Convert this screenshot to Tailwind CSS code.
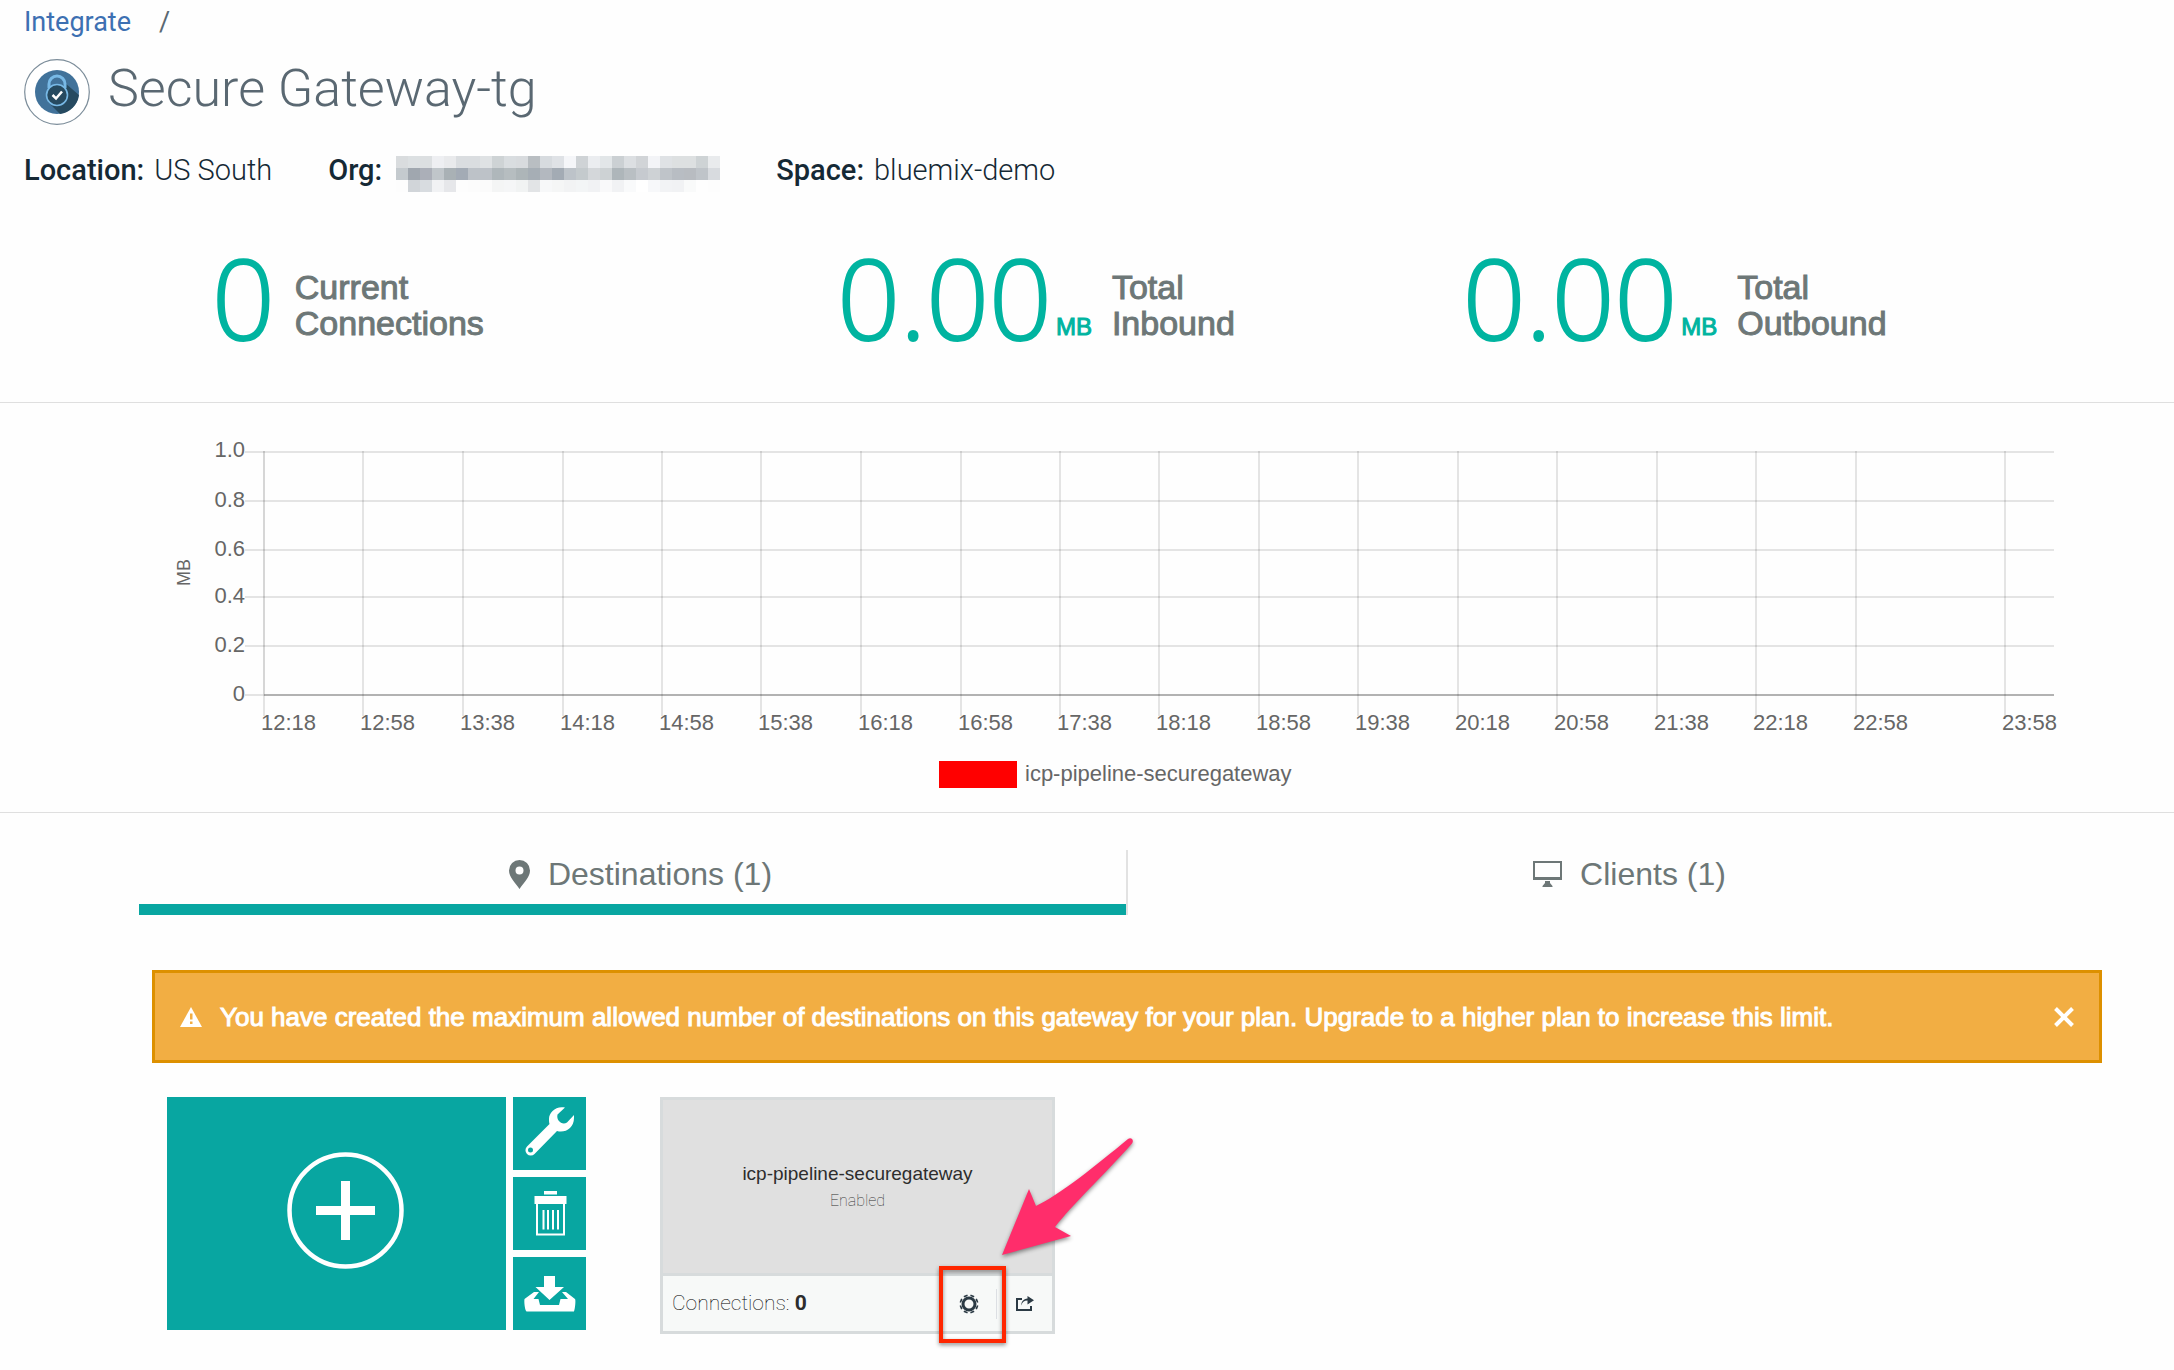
<!DOCTYPE html>
<html lang="en">
<head>
<meta charset="utf-8">
<meta name="viewport" content="width=device-width, initial-scale=1">
<title>Secure Gateway-tg</title>
<script src="https://cdn.jsdelivr.net/npm/@tailwindcss/browser@4"></script>
</head>
<body class="bg-[#fefefe] font-['Liberation_Sans',sans-serif] text-[#6d7777]">

<header class="px-6 pt-[6px] font-[Roboto,sans-serif]">
  <nav class="flex gap-7 text-[27px] leading-[32px]" aria-label="Breadcrumb">
    <a href="#" class="text-[#3d70b2]">Integrate</a>
    <span class="text-[#5a6872]">/</span>
  </nav>
  <div class="mt-[21px] flex items-start gap-[18px]">
    <svg class="size-[66px] shrink-0" viewBox="0 0 66 66" fill="none" aria-hidden="true">
      <circle cx="33" cy="33" r="32.3" fill="#fff" stroke="#7c8d9a" stroke-width="1.2"/>
      <circle cx="33" cy="33" r="22" fill="#41729a"/>
      <path d="M41 24 55 36A22 22 0 0 1 36 55L24 43Z" fill="#264a60"/>
      <path d="M25 29v-4a8 8 0 0 1 16 0v4" stroke="#78b9e6" stroke-width="3"/>
      <circle cx="33" cy="36" r="10.500" fill="#264a60" stroke="#78b9e6" stroke-width="1.600"/>
      <path d="m28.500 36 3.500 3.500 6-7" stroke="#fff" stroke-width="2.500"/>
    </svg>
    <h1 class="text-[52px] leading-[60px] font-light text-[#5a6872]">Secure Gateway-tg</h1>
  </div>
  <dl class="mt-[25px] flex gap-14 text-[29px] leading-[40px] text-[#152935]">
    <div class="flex gap-[10px]"><dt class="font-medium">Location:</dt><dd class="font-light">US South</dd></div>
    <div class="flex gap-[6px]"><dt class="font-medium">Org:</dt><dd class="pt-[6px]"><svg id="redacted" class="h-9 w-[332px]" viewBox="0 0 332 36" shape-rendering="crispEdges" role="img" aria-label="Hidden"></svg></dd></div>
    <div class="flex gap-[10px]"><dt class="font-medium">Space:</dt><dd class="font-light">bluemix-demo</dd></div>
  </dl>
</header>

<section class="grid grid-cols-3 border-b border-[#dfdfdf] pt-[54px] pr-[86px] pb-[53px] pl-[212px]">
  <div class="flex items-end">
    <span class="font-['Open_Sans',sans-serif] text-[110px] leading-[103px] font-light text-[#00b4a0] [-webkit-text-stroke:2px]">0</span>
    <span class="ml-5 pb-2 text-[34px] leading-[36px] [-webkit-text-stroke:1px]">Current<br>Connections</span>
  </div>
  <div class="flex items-end">
    <span class="font-['Open_Sans',sans-serif] text-[110px] leading-[103px] font-light text-[#00b4a0] [-webkit-text-stroke:2px]">0.00</span>
    <span class="ml-1 pb-2 text-[24px] leading-[28px] text-[#00b4a0] [-webkit-text-stroke:1px]">MB</span>
    <span class="ml-5 pb-2 text-[34px] leading-[36px] [-webkit-text-stroke:1px]">Total<br>Inbound</span>
  </div>
  <div class="flex items-end">
    <span class="font-['Open_Sans',sans-serif] text-[110px] leading-[103px] font-light text-[#00b4a0] [-webkit-text-stroke:2px]">0.00</span>
    <span class="ml-1 pb-2 text-[24px] leading-[28px] text-[#00b4a0] [-webkit-text-stroke:1px]">MB</span>
    <span class="ml-5 pb-2 text-[34px] leading-[36px] [-webkit-text-stroke:1px]">Total<br>Outbound</span>
  </div>
</section>

<section class="border-b border-[#dfdfdf]">
  <svg class="block w-full" viewBox="0 0 2174 409" fill="#666" stroke="none" font-size="22" role="img" aria-label="Gateway traffic in MB">
    <g fill="#000" fill-opacity=".1" shape-rendering="crispEdges">
      <path d="M245 48h1809v2H245zM245 97h1809v2H245zM245 146h1809v2H245zM245 193h1809v2H245zM245 242h1809v2H245zM245 291h1809v2H245z"/>
      <path d="M264 291h1790v2H264z" fill-opacity=".22"/>
      <path d="M263 48h2v243h-2z" fill-opacity=".06"/>
      <g id="ticks"></g>
    </g>
    <text x="190" y="183" font-size="18" transform="rotate(-90 190 183)">MB</text>
    <g text-anchor="end">
      <text x="245" y="54">1.0</text><text x="245" y="104">0.8</text><text x="245" y="153">0.6</text><text x="245" y="200">0.4</text><text x="245" y="249">0.2</text><text x="245" y="298">0</text>
    </g>
    <g id="times"></g>
    <path d="M939 358h78v27h-78z" fill="#f00"/>
    <text x="1025" y="378">icp-pipeline-securegateway</text>
  </svg>
</section>

<main>
  <div class="mt-[37px] flex pr-[59px] pl-[139px]" role="tablist">
    <button role="tab" aria-selected="true" class="flex h-[65px] flex-1 items-center justify-center gap-[18px] border-b-[11px] border-[#08a6a1] pb-[6px] pl-4 text-[32px]">
      <svg class="h-[29px] w-[21px]" viewBox="0 0 21 29" fill="currentColor" fill-rule="evenodd" aria-hidden="true"><path d="M10.500 0A10.500 10.500 0 0 0 0 10.500C0 17 6 22.500 10.500 29 15 22.500 21 17 21 10.500A10.500 10.500 0 0 0 10.500 0Zm0 6.500a4 4 0 1 1 0 8 4 4 0 0 1 0-8Z"/></svg>
      Destinations (1)
    </button>
    <button role="tab" aria-selected="false" class="flex h-[65px] flex-1 items-center justify-center gap-[18px] border-l-2 border-[#e2e2e2] pb-[17px] pl-4 text-[32px]">
      <svg class="h-[26px] w-[29px]" viewBox="0 0 29 26" fill="currentColor" fill-rule="evenodd" aria-hidden="true"><path d="M0 0h29v19H0ZM2 2v14h25V2ZM12 20h5v2l2.500 3v1h-10v-1l2.500-3Z"/></svg>
      Clients (1)
    </button>
  </div>

  <div role="alert" class="mt-[55px] mr-[72px] ml-[152px] flex h-[93px] items-center border-[3px] border-[#dd9000] bg-[#f2ae43] px-[25px] text-white">
    <svg class="mr-[18px] h-5 w-[22px] shrink-0" viewBox="0 0 22 20" aria-hidden="true"><path d="M11 0 22 20H0Z" fill="#fff"/><path d="M10 6.500h2.500v6H10ZM10 14.500h2.500V17H10Z" fill="#f2ae43"/></svg>
    <p class="flex-1 text-[26px] leading-[32px] [-webkit-text-stroke:1px]">You have created the maximum allowed number of destinations on this gateway for your plan. Upgrade to a higher plan to increase this limit.</p>
    <button aria-label="Close"><svg class="size-5" viewBox="0 0 20 20" stroke="#fff" stroke-width="4" aria-hidden="true"><path d="m1.500 1.500 17 17m0-17-17 17"/></svg></button>
  </div>

  <div class="mt-[34px] flex items-start pb-9 pl-[167px]">
    <button aria-label="Add destination" class="flex h-[233px] w-[339px] items-center justify-center bg-[#08a6a1] pb-[6px] pl-[18px]">
      <svg class="size-[117px]" viewBox="0 0 117 117" fill="none" stroke="#fff" aria-hidden="true"><circle cx="58.500" cy="58.500" r="56" stroke-width="4.500"/><path d="M29 58.500h59M58.500 29v59" stroke-width="9"/></svg>
    </button>
    <div class="ml-[7px] flex flex-col gap-[7px]">
      <button aria-label="Edit gateway" class="bg-[#08a6a1]"><svg class="block size-[73px]" viewBox="0 0 73 73" fill="#fff" fill-rule="evenodd" aria-hidden="true"><path d="M52 10.500C43 8.500 36 15 36 22c0 2 0 3 .5 5L14 49.500a5 5 0 0 0 7.500 7.500L44 34c8 2.500 17-3 17-13V18l-7 7.500c-5 3-11-2-9.500-8ZM17.500 50.500a2.500 2.500 0 1 1 0 5 2.500 2.500 0 0 1 0-5Z"/></svg></button>
      <button aria-label="Delete gateway" class="bg-[#08a6a1]"><svg class="block size-[73px]" viewBox="0 0 73 73" fill="none" stroke="#fff" aria-hidden="true"><path d="M31 14h13v3.500H31ZM21.500 19h32v8h-32Z" fill="#fff" stroke="none"/><path d="M24 26v31.500h27V26" stroke-width="2"/><path d="M30.500 33v19.500M35 33v19.500M40 33v19.500M45 33v19.500" stroke-width="2"/></svg></button>
      <button aria-label="Download" class="bg-[#08a6a1]"><svg class="block size-[73px]" viewBox="0 0 73 73" fill="#fff" aria-hidden="true"><path d="M31 19h11v11h9L36.500 43 22.500 30H31Z"/><path d="M21 35h5l-5.500 7h5L27 48h19l1.500-6h7.500l-6-7h4l9 7c1 1 0 10-1 12.500H13.500c-2-2-2.500-11-2-12.500Z"/></svg></button>
    </div>

    <article class="relative ml-[74px] flex h-[237px] w-[395px] flex-col border-[3px] border-[#d7dbdc]">
      <div class="flex flex-1 flex-col items-center justify-center border-b-[3px] border-[#d7dbdc] bg-[#e0e0e0]">
        <h2 class="text-[19px] leading-[28px] text-[#2d2d2d]">icp-pipeline-securegateway</h2>
        <p class="font-[Roboto,sans-serif] text-[16px] leading-[26px] font-thin text-[#333]">Enabled</p>
      </div>
      <div class="flex h-[55px] items-center bg-[#f7f9f8] pr-[18px] pl-[9px] text-[#28343c]">
        <p class="flex-1 font-[Roboto,sans-serif] text-[21px] font-thin text-black">Connections: <b class="font-bold text-[#2d2d2d]">0</b></p>
        <button aria-label="Settings"><svg class="block size-5" viewBox="-10 -10 20 20" fill="none" stroke="#2b3a44" aria-hidden="true"><circle r="6" stroke-width="3"/><path stroke-width="4" d="M-3.600-8.700-3-7.200M3.600-8.700 3-7.200M8.700-3.600 7.200-3M8.700 3.600 7.200 3M3.600 8.700 3 7.200M-3.600 8.700-3 7.200M-8.700 3.600-7.200 3M-8.700-3.600-7.200-3"/></svg></button>
        <span class="mr-[19px] ml-[17px] h-[30px] w-px bg-[#dcdfe3]"></span>
        <button aria-label="Share"><svg class="block h-4 w-[18px]" viewBox="0 0 18 16" fill="none" stroke="#2b3a44" stroke-width="2" aria-hidden="true"><path d="M6 3H1v11h14v-4"/><path d="M5.500 9.500C6 6 8 4.500 11.500 4.500V8.500L18 4.300 11.500 0v2.500C7.500 3 5 5.500 5.500 9.500Z" fill="#2b3a44" stroke="none"/></svg></button>
      </div>
      <svg class="pointer-events-none absolute top-[30px] left-[267px] h-[230px] w-[220px] max-w-none drop-shadow-[0_2px_2px_rgba(0,0,0,0.45)]" viewBox="930 1130 220 230" aria-hidden="true">
        <path d="M941 1268h63v73h-63Z" fill="none" stroke="#ff2600" stroke-width="4"/>
        <path d="M1002 1255 1029 1189 1036 1206C1058 1196 1098 1164 1128 1139 1131 1136.500 1134.500 1140 1132 1143.500 1104 1175 1072 1205 1055 1227L1071 1236Z" fill="#ff2d6b"/>
      </svg>
    </article>
  </div>
</main>

<script>
const NS = 'http://www.w3.org/2000/svg';
function add(parent, tag, attrs, text) {
  const el = document.createElementNS(NS, tag);
  for (const k in attrs) el.setAttribute(k, attrs[k]);
  if (text) el.textContent = text;
  parent.append(el);
}

// Time axis: [x, label]
const times = [[264,'12:18'],[363,'12:58'],[463,'13:38'],[563,'14:18'],[662,'14:58'],[761,'15:38'],[861,'16:18'],[961,'16:58'],[1060,'17:38'],[1159,'18:18'],[1259,'18:58'],[1358,'19:38'],[1458,'20:18'],[1557,'20:58'],[1657,'21:38'],[1756,'22:18'],[1856,'22:58'],[2005,'23:58']];
for (const [x, label] of times) {
  add(document.getElementById('ticks'), 'rect', {x: x - 1, y: 48, width: 2, height: 265});
  add(document.getElementById('times'), 'text', {x: x - 3, y: 327}, label);
}

// Mosaic that hides the organisation name
const mosaic = [
  'd9dcde dce0e2 dcdfe1 eeeff2 e9eaec dadde0 dadde0 dfe2e4 ced3d5 d9dde0 d8dbde b9bec2 d7dbdf dfe2e6 f5f6f9 cfd3d6 ebedf0 e2e6e8 cbd0d3 dcdfe2 d1d4d7 f3f4f7 dfe2e5 dde0e1 dde0e1 ced3d5 e9ebed',
  'c4cace a0a7af abafb8 c0c6ca a9b1b5 a3abb5 bdc2c8 bdc2c8 afb7bb b6bdc0 adb5b8 a6aeb5 b3b8bf a3abb4 bdc3c9 c4cacd d4d7da cdd2d4 aeb6ba b9bfc3 c6cacf ced2d5 bfc4c9 b8bdc3 b8bcc1 bfc4c9 d8dbdf',
  'fdfdfd d1d5d9 d8dce0 f1f2f4 e6e7ea fdfdfd fcfcfc fbfbfb f4f5f5 f5f6f7 f1f3f3 e2e4e6 f7f8f9 f5f6f6 f2f3f4 f3f5f6 f1f2f4 f9f9fa f1f2f4 f9fafb ffffff f7f8fa f2f3f5 f1f2f4 f9fafa fefefe fdfdfd'
];
mosaic.forEach((row, r) => row.split(' ').forEach((c, i) =>
  add(document.getElementById('redacted'), 'rect', {x: 8 + i * 12, y: r * 12, width: 12, height: 12, fill: '#' + c})));
</script>
</body>
</html>
